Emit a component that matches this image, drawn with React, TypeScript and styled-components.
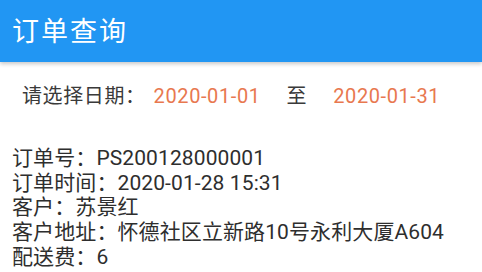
import React from "react";
import styled, { createGlobalStyle } from "styled-components";

const Global = createGlobalStyle`
  html, body { margin: 0; padding: 0; background: #ffffff; }
  body { font-family: "Roboto", "Noto Sans CJK SC", sans-serif; }
`;

const Page = styled.div`
  width: 482px;
  height: 272px;
  overflow: hidden;
  background: #ffffff;
  display: flex;
  flex-direction: column;
`;

const Header = styled.header`
  height: 62px;
  background: #2196f3;
  display: flex;
  align-items: center;
  padding: 0 0 4px 12px;
  box-sizing: border-box;
  box-shadow: 0 2px 4px rgba(0, 0, 0, 0.22);
  position: relative;
  z-index: 1;
`;

const Title = styled.h1`
  margin: 0;
  font-size: 27px;
  font-weight: 400;
  color: #ffffff;
  font-family: "Roboto", "Noto Sans CJK SC", sans-serif;
  letter-spacing: 2px;
`;

const DateRow = styled.div`
  display: flex;
  align-items: center;
  padding: 22px 0 0 22px;
  font-size: 20px;
  line-height: 24px;
  letter-spacing: 0.6px;
  color: #3a3a3a;
`;

const Label = styled.span``;

const DateValue = styled.span<{ $gap: number }>`
  color: #e8784f;
  margin-left: ${(p) => p.$gap}px;
`;

const To = styled.span`
  margin-left: 26px;
  color: #3a3a3a;
`;

const Info = styled.div`
  display: flex;
  flex-direction: column;
  padding: 38px 0 0 12px;
  font-size: 21px;
  line-height: 24.7px;
  letter-spacing: 0.1px;
  color: #2e2e2e;
`;

const Line = styled.div`
  white-space: nowrap;
`;

export default function App() {
  return (
    <>
      <Global />
      <Page>
        <Header>
          <Title>订单查询</Title>
        </Header>
        <DateRow>
          <Label>请选择日期：</Label>
          <DateValue $gap={8}>2020-01-01</DateValue>
          <To>至</To>
          <DateValue $gap={26}>2020-01-31</DateValue>
        </DateRow>
        <Info>
          <Line>订单号：PS200128000001</Line>
          <Line>订单时间：2020-01-28 15:31</Line>
          <Line>客户：苏景红</Line>
          <Line>客户地址：怀德社区立新路10号永利大厦A604</Line>
          <Line>配送费：6</Line>
        </Info>
      </Page>
    </>
  );
}
